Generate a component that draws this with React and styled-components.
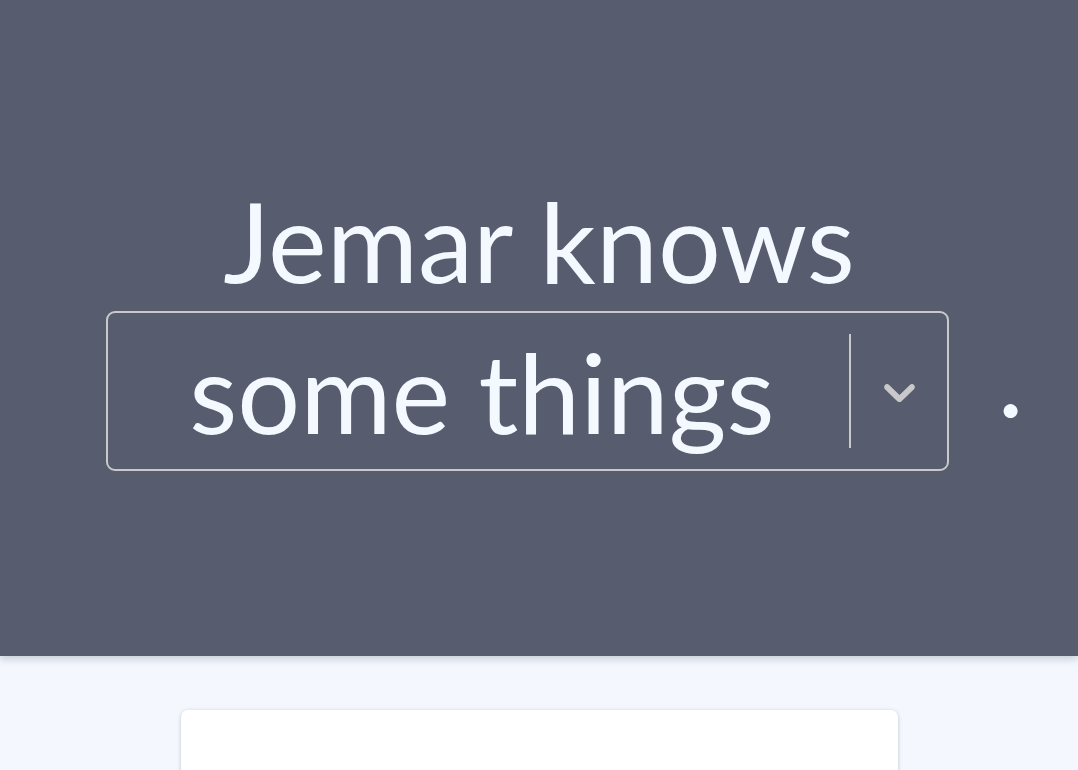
import React from "react";
import styled, { createGlobalStyle } from "styled-components";

const GlobalStyle = createGlobalStyle`
  html, body {
    margin: 0;
    padding: 0;
    background: #f4f8fe;
    font-family: Lato, "Open Sans", sans-serif;
    overflow: hidden;
  }
`;

const Header = styled.header`
  height: 656px;
  box-sizing: border-box;
  padding-bottom: 7px;
  background: #575c6e;
  color: #f4f8ff;
  display: flex;
  flex-direction: column;
  align-items: center;
  justify-content: center;
  box-shadow: 0 3px 8px rgba(60, 70, 100, 0.25);
  position: relative;
  z-index: 1;
`;

const Title = styled.h1`
  margin: 0;
  font-weight: 400;
  font-size: 111px;
  line-height: 1.2;
  text-align: center;
  display: flex;
  flex-direction: column;
  align-items: center;
`;

const Line = styled.div`
  display: flex;
  align-items: center;
  justify-content: center;
`;

const SelectBox = styled.div`
  width: 843px;
  height: 160px;
  box-sizing: border-box;
  margin: 0 48px 0 52px;
  border: 2px solid #c9c9cc;
  border-radius: 9px;
  display: flex;
  align-items: center;
`;

const Value = styled.div`
  flex: 1;
  text-align: center;
  padding-left: 6px;
`;

const Separator = styled.span`
  align-self: stretch;
  width: 2px;
  margin: 21px 0;
  background: #c9c9cc;
`;

const Indicator = styled.div`
  width: 96px;
  display: flex;
  align-items: center;
  justify-content: center;
  color: #c9c9cc;
`;

const Period = styled.span`
  margin-bottom: 34px;
`;

const Main = styled.main`
  padding-top: 54px;
  display: flex;
  justify-content: center;
`;

const Card = styled.section`
  width: 717px;
  height: 200px;
  background: #ffffff;
  border-radius: 7px;
  box-shadow: 0 1px 4px rgba(40, 50, 80, 0.25);
`;

const Chevron = () => (
  <svg width="53" height="53" viewBox="0 0 20 20" fill="currentColor">
    <path d="M4.516 7.548c0.436-0.446 1.043-0.481 1.576 0l3.908 3.747 3.908-3.747c0.533-0.481 1.141-0.446 1.574 0 0.436 0.445 0.408 1.197 0 1.615-0.406 0.418-4.695 4.502-4.695 4.502-0.217 0.223-0.502 0.335-0.787 0.335s-0.57-0.112-0.789-0.335c0 0-4.287-4.084-4.695-4.502s-0.436-1.17 0-1.615z" />
  </svg>
);

export default function App() {
  return (
    <>
      <GlobalStyle />
      <Header>
        <Title>
          <Line>Jemar knows</Line>
          <Line>
            <SelectBox>
              <Value>some things</Value>
              <Separator />
              <Indicator>
                <Chevron />
              </Indicator>
            </SelectBox>
            <Period>.</Period>
          </Line>
        </Title>
      </Header>
      <Main>
        <Card />
      </Main>
    </>
  );
}
